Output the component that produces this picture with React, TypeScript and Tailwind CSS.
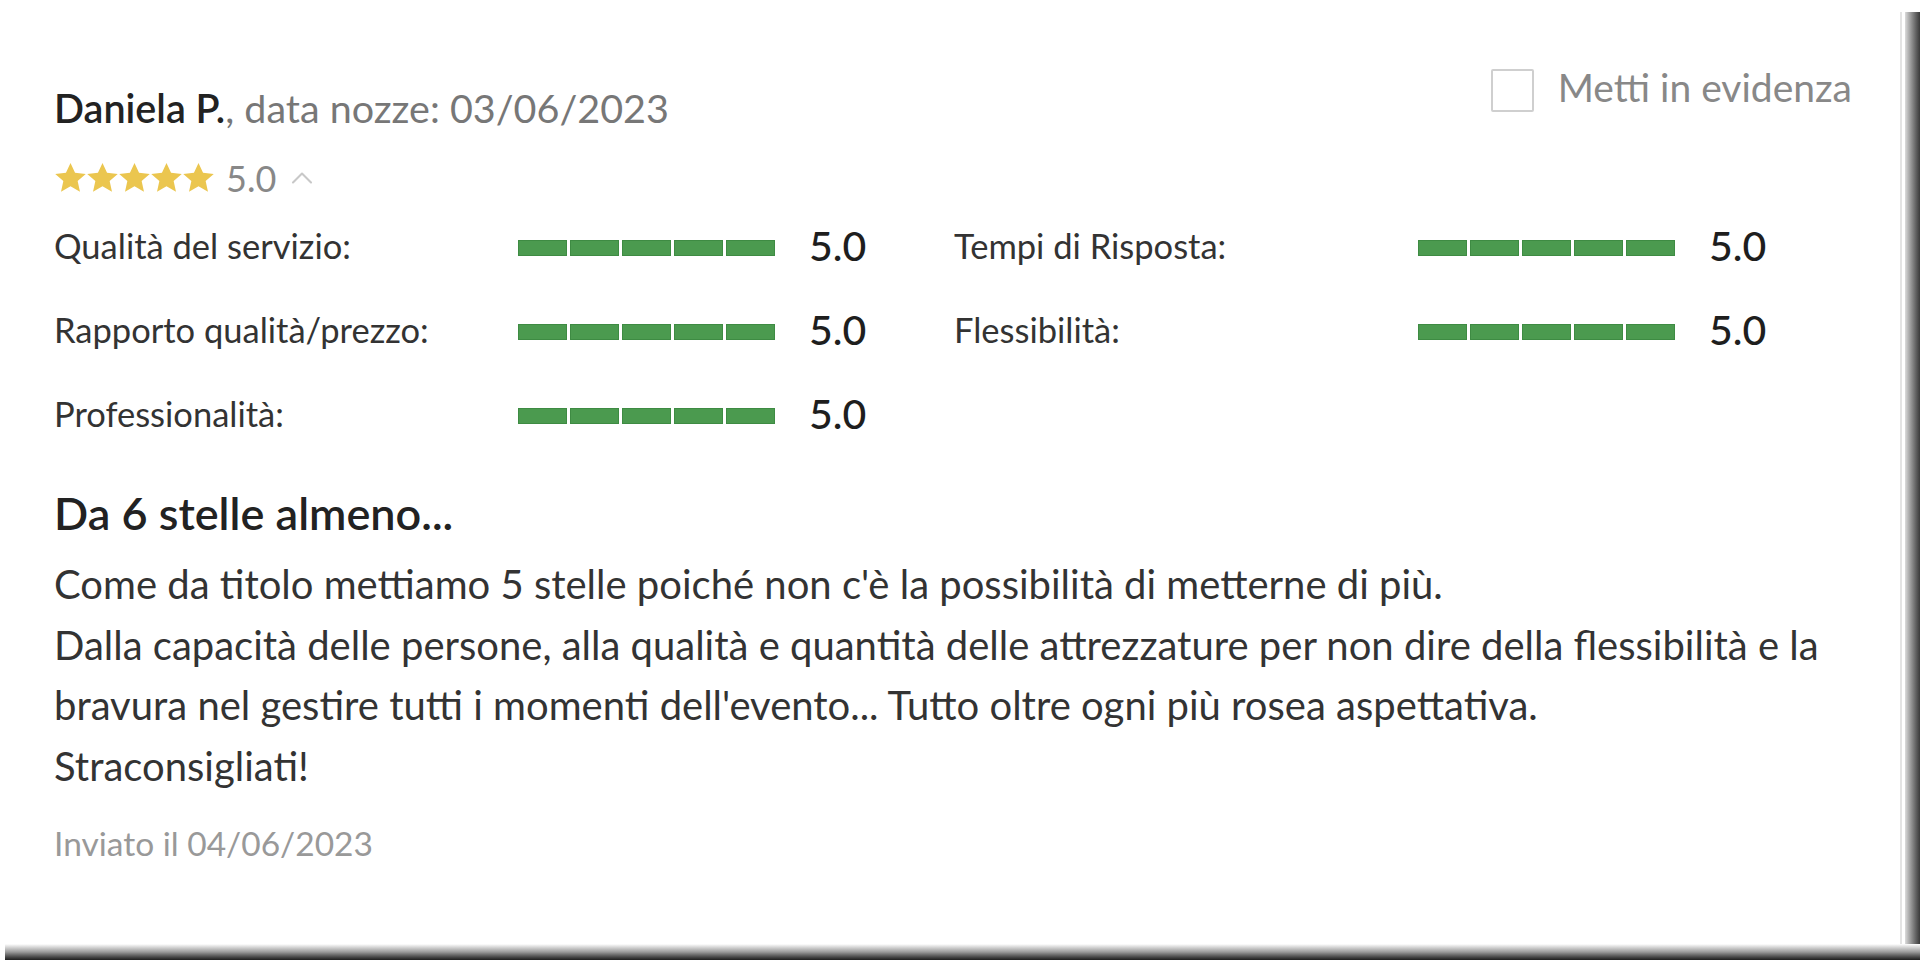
import { ChevronUp } from "lucide-react";

const ratings = [
  { label: "Qualità del servizio:", value: "5.0" },
  { label: "Tempi di Risposta:", value: "5.0" },
  { label: "Rapporto qualità/prezzo:", value: "5.0" },
  { label: "Flessibilità:", value: "5.0" },
  { label: "Professionalità:", value: "5.0" },
];

function Star() {
  return (
    <svg viewBox="0 0 24 24" className="w-[33px] h-[33px] -mr-[1px]">
      <path
        d="M12 0.8l3.3 7.1 7.8.8-5.9 5.2 1.7 7.7L12 17.6l-6.9 4 1.7-7.7-5.9-5.2 7.8-.8z"
        fill="#ebc64f"
      />
    </svg>
  );
}

function Bar() {
  return (
    <div className="flex gap-[3px] w-[257px] mt-[3px]">
      {[0, 1, 2, 3, 4].map((i) => (
        <div key={i} className="flex-1 h-[16px] bg-[#4b9a4f] border border-[#3e8b43]" />
      ))}
    </div>
  );
}

export default function App() {
  return (
    <div className="w-[1920px] h-[960px] bg-white flex flex-col overflow-hidden font-['Lato',sans-serif]">
      <div className="flex flex-1">
        {/* Review card */}
        <div className="flex-1 pl-[54px] pr-[48px] pt-[69px]">
          <div className="flex justify-between items-start">
            <div className="mt-[17px] text-[39.5px] leading-[44px] text-[#777]">
              <span className="font-semibold text-[#222]">Daniela P.</span>, data nozze: 03/06/2023
            </div>
            <label className="flex items-center gap-[24px]">
              <span className="w-[43px] h-[43px] border-2 border-[#cfcfcf] rounded-[2px]" />
              <span className="text-[39px] leading-[44px] text-[#888] -mt-[8px]">Metti in evidenza</span>
            </label>
          </div>

          <div className="mt-[32px] flex items-center h-[32px]">
            <div className="flex">
              {[0, 1, 2, 3, 4].map((i) => (
                <Star key={i} />
              ))}
            </div>
            <span className="ml-[12px] text-[36px] leading-[40px] text-[#888]">5.0</span>
            <ChevronUp className="ml-[8px] w-[36px] h-[36px] text-[#c8c8c8]" strokeWidth={1.4} />
          </div>

          <div className="mt-[32px] grid grid-cols-[900px_1fr] gap-y-[44px]">
            {ratings.map((r) => (
              <div key={r.label} className="flex items-center h-[40px]">
                <span className="w-[464px] text-[34.5px] leading-[40px] text-[#333]">{r.label}</span>
                <Bar />
                <span className="ml-[34px] text-[41px] leading-[40px] font-medium text-[#1e1e1e]">{r.value}</span>
              </div>
            ))}
          </div>

          <h2 className="mt-[57px] text-[45px] leading-[44px] font-semibold text-[#222]">Da 6 stelle almeno...</h2>

          <p className="mt-[19px] text-[40px] leading-[60.6px] text-[#333]">
            Come da titolo mettiamo 5 stelle poiché non c'è la possibilità di metterne di più.
            <br />
            Dalla capacità delle persone, alla qualità e quantità delle attrezzature per non dire della flessibilità e la bravura nel gestire tutti i momenti dell'evento... Tutto oltre ogni più rosea aspettativa.
            <br />
            Straconsigliati!
          </p>

          <div className="mt-[29px] text-[33.5px] leading-[36px] text-[#999]">Inviato il 04/06/2023</div>
        </div>

        {/* right shadow edge */}
        <div className="w-[20px] mt-[12px] flex">
          <div className="w-[2px] bg-[#e4e4e4]" />
          <div className="w-[3px] bg-white" />
          <div className="flex-1 bg-linear-to-r from-[#dcdcdc] to-[#3a3a3a]" />
        </div>
      </div>
      {/* bottom shadow edge */}
      <div className="h-[16px] ml-[5px] bg-linear-to-b from-white via-[#9a9a9a] to-[#1e1e1e]" />
    </div>
  );
}
